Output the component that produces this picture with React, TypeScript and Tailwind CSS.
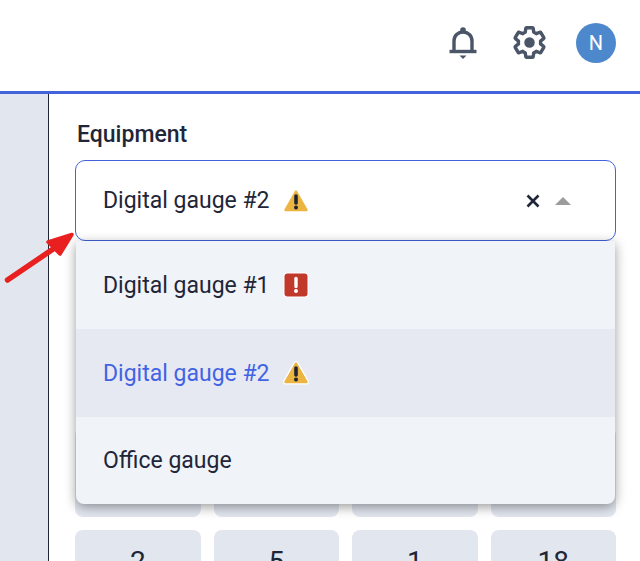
import { ReactNode } from "react";

const FONT = "font-['Roboto','Liberation_Sans',sans-serif]";

function WarningIcon({ halo = false }: { halo?: boolean }) {
  const tri = "M14 4.500 L24.500 23 H3.500 Z";
  return (
    <svg width="28" height="28" viewBox="0 0 28 28" className="flex-none">
      {halo && <path d={tri} fill="#ffffff" stroke="#ffffff" strokeWidth="5" strokeLinejoin="round" />}
      <path d={tri} fill="#ecb441" stroke="#ecb441" strokeWidth="2.500" strokeLinejoin="round" />
      <path d="M14 9 v7" stroke="#1e2433" strokeWidth="3.600" strokeLinecap="round" />
      <circle cx="14" cy="20.500" r="2" fill="#1e2433" />
    </svg>
  );
}

function ErrorIcon() {
  return (
    <svg width="28" height="28" viewBox="0 0 28 28" className="flex-none">
      <rect x="1.500" y="1.500" width="25" height="25" rx="4" fill="#ffffff" />
      <rect x="2.500" y="2.500" width="23" height="23" rx="3" fill="#c0392b" />
      <path d="M14 7.500 v8" stroke="#ffffff" strokeWidth="3.400" strokeLinecap="round" />
      <circle cx="14" cy="20" r="2" fill="#ffffff" />
    </svg>
  );
}

function BellIcon() {
  return (
    <svg width="30" height="34" viewBox="0 0 30 34" fill="none" stroke="#4a5568" strokeWidth="3.400">
      <path d="M6 25 V15 C6 9.500 10 6 15 6 C20 6 24 9.500 24 15 V25" />
      <path d="M1.500 25.500 H28.500" strokeWidth="3.400" />
      <circle cx="15" cy="4" r="2.800" fill="#4a5568" stroke="none" />
      <path d="M11.500 29.500 H18.500 L15 33 Z" fill="#4a5568" stroke="none" />
    </svg>
  );
}

function GearIcon() {
  return (
    <svg width="37" height="37" viewBox="0 0 24 24" fill="none">
      <path
        d="M19.14 12.94c.04-.3.06-.61.06-.94 0-.32-.02-.64-.07-.94l2.03-1.58c.18-.14.23-.41.12-.61l-1.92-3.32c-.12-.22-.37-.29-.59-.22l-2.39.96c-.5-.38-1.03-.7-1.62-.94l-.36-2.54c-.04-.24-.24-.41-.48-.41h-3.84c-.24 0-.43.17-.47.41l-.36 2.54c-.59.24-1.13.57-1.62.94l-2.39-.96c-.22-.08-.47 0-.59.22L2.74 8.870c-.12.21-.08.47.12.61l2.03 1.58c-.05.3-.09.63-.09.94s.02.64.07.94l-2.03 1.58c-.18.14-.23.41-.12.61l1.92 3.32c.12.22.37.29.59.22l2.39-.96c.5.38 1.03.7 1.62.94l.36 2.54c.05.24.24.41.48.41h3.84c.24 0 .44-.17.47-.41l.36-2.54c.59-.24 1.13-.56 1.62-.94l2.39.96c.22.08.47 0 .59-.22l1.92-3.32c.12-.22.07-.47-.12-.61l-2.010-1.58z"
        stroke="#4a5568"
        strokeWidth="2.200"
        strokeLinejoin="round"
      />
      <circle cx="12" cy="12" r="3.400" fill="#4a5568" />
    </svg>
  );
}

function Option({ children, active = false, icon }: { children: ReactNode; active?: boolean; icon?: ReactNode }) {
  return (
    <div
      className={`h-[88px] last:h-[87px] flex items-center gap-[12px] pl-[27px] text-[23px] ${
        active ? "bg-[#e6e9f1] text-[#4263e3]" : "text-[#1e2638]"
      }`}
    >
      <span className="pt-[2px]">{children}</span>
      {icon}
    </div>
  );
}

const cards = ["", "", "", "", "2", "5", "1", "18"];

export default function App() {
  return (
    <div className={`${FONT} relative w-[640px] h-[561px] overflow-hidden bg-white`}>
      {/* Header */}
      <header className="h-[94px] border-b-[3px] border-[#4263d9] flex items-center justify-end pr-[24px] pb-[6px]">
        <div className="flex items-center">
          <BellIcon />
          <span className="ml-[33px]">
            <GearIcon />
          </span>
          <span className="ml-[28px] w-[40px] h-[40px] rounded-full bg-[#4e88cc] text-white flex items-center justify-center text-[20px] pt-[1px]">
            N
          </span>
        </div>
      </header>

      <div className="flex h-[467px]">
        <aside className="w-[49px] flex-none bg-[#e2e6ef] border-r border-[#1e2638]" />
        <main className="flex-1 pl-[26px] pr-[24px] pt-[27px] relative">
          <div className="pl-[2px] text-[23px] leading-[28px] font-medium text-[#1e2638]">Equipment</div>
          <div className="mt-[11px] h-[81px] rounded-[10px] border border-[#4263d9] bg-white flex items-center pl-[27px] pr-[44px] text-[23px] text-[#1e2638]">
            <span className="pt-[2px]">Digital gauge #2</span>
            <span className="ml-[12px]">
              <WarningIcon />
            </span>
            <span className="ml-auto text-[#1e2638]">
              <svg width="14" height="14" viewBox="0 0 14 14" stroke="currentColor" strokeWidth="2.600">
                <path d="M1.500 1.500 L12.500 12.500 M12.500 1.500 L1.500 12.500" />
              </svg>
            </span>
            <span className="ml-[15px] w-0 h-0 border-x-[8px] border-x-transparent border-b-[8px] border-b-[#9c9c9c]" />
          </div>

          {/* Cards behind the dropdown */}
          <div className="mt-[186px] grid grid-cols-4 gap-[13px]">
            {cards.map((c, i) => (
              <div
                key={i}
                className="h-[90px] rounded-[8px] bg-[#e2e6ef] flex justify-center pt-[16px] text-[28px] leading-[32px] text-[#1e2638]"
              >
                {c}
              </div>
            ))}
          </div>

          {/* Dropdown menu */}
          <div className="absolute left-[27px] top-[147px] w-[539px] h-[263px] rounded-b-[8px] bg-[#f0f3f8] overflow-hidden shadow-[0_3px_12px_rgba(0,0,0,0.4)]">
            <Option icon={<ErrorIcon />}>Digital gauge #1</Option>
            <Option active icon={<WarningIcon halo />}>
              Digital gauge #2
            </Option>
            <Option>Office gauge</Option>
          </div>
        </main>
      </div>

      {/* Red annotation arrow */}
      <svg className="absolute left-0 top-[225px]" width="80" height="64" viewBox="0 0 80 64" fill="none">
        <path d="M7.500 55 L62 18" stroke="#e8201f" strokeWidth="5.500" strokeLinecap="round" />
        <path d="M48 17 L72 9.500 L60 29 Z" fill="#e8201f" stroke="#e8201f" strokeWidth="3.500" strokeLinejoin="round" />
      </svg>
    </div>
  );
}
